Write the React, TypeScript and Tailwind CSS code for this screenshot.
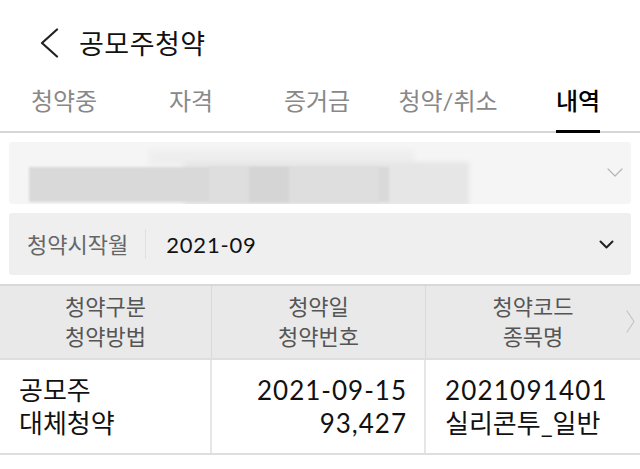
const tabs = ["청약중", "자격", "증거금", "청약/취소", "내역"];

const font = { fontFamily: 'Lato, "Noto Sans CJK KR", "Noto Sans", sans-serif' };

function Chevron({ d, w, h, stroke, width }: { d: string; w: number; h: number; stroke: string; width: number }) {
  return (
    <svg width={w} height={h} viewBox={`0 0 ${w} ${h}`} fill="none">
      <path d={d} stroke={stroke} strokeWidth={width} strokeLinecap="round" strokeLinejoin="round" />
    </svg>
  );
}

export default function App() {
  return (
    <div className="w-[640px] h-[469px] bg-white overflow-hidden text-[#111]" style={font}>
      {/* 헤더 */}
      <div className="h-[84px] flex items-center pl-[40px] pt-[2px]">
        <Chevron d="M17 1.5 L2 15 L17 28.5" w={19} h={30} stroke="#222" width={2.2} />
        <div className="ml-[20px] text-[27px] leading-none tracking-[0.5px]">공모주청약</div>
      </div>

      {/* 탭 */}
      <div className="h-[49px] flex border-b-2 border-[#d6d6d6]">
        <div className="w-[128px] flex justify-center">
          <span className="text-[24px] text-[#888] leading-[34px]">{tabs[0]}</span>
        </div>
        <div className="w-[126px] flex justify-center">
          <span className="text-[24px] text-[#888] leading-[34px]">{tabs[1]}</span>
        </div>
        <div className="w-[126px] flex justify-center">
          <span className="text-[24px] text-[#888] leading-[34px]">{tabs[2]}</span>
        </div>
        <div className="w-[136px] flex justify-center">
          <span className="text-[24px] text-[#888] leading-[34px]">{tabs[3]}</span>
        </div>
        <div className="w-[124px] flex justify-center">
          <span className="text-[24px] text-black font-medium leading-[34px] border-b-[3px] border-black h-[49px] -mb-[2px]">
            {tabs[4]}
          </span>
        </div>
      </div>

      {/* 계좌 선택 (가림) */}
      <div className="px-[9px] pt-[9px] flex flex-col gap-[9px]">
        <div className="relative h-[62px] bg-[#f5f5f5] rounded-[3px] flex items-center justify-end pr-[8px] overflow-hidden">
          <div className="absolute left-[140px] top-[8px] w-[265px] h-[16px] bg-[#eeeeee] blur-[2px]" />
          <div className="absolute left-[175px] top-[20px] w-[285px] h-[44px] bg-[#e6e6e6] blur-[2px]" />
          <div className="absolute left-[20px] top-[25px] w-[360px] h-[35px] bg-[#d9d9d9] blur-[1px]" />
          <div className="absolute left-[200px] top-[25px] w-[170px] h-[35px] bg-[#dedede] blur-[1px]" />
          <div className="absolute left-[240px] top-[25px] w-[40px] h-[35px] bg-[#d5d5d5] blur-[1px]" />
          <Chevron d="M1 1 L8 8 L15 1" w={16} h={10} stroke="#b5b5b5" width={1.2} />
        </div>

        <div className="h-[62px] bg-[#efefef] rounded-[3px] flex items-center pl-[18px] pr-[17px]">
          <span className="text-[22px] text-[#666]">청약시작월</span>
          <div className="w-px h-[30px] bg-[#e0e0e0] ml-[17px] mr-[20px]" />
          <span className="text-[22px] text-[#111] tracking-[0.8px] flex-1">2021-09</span>
          <Chevron d="M1.5 1.5 L7.5 7.5 L13.5 1.5" w={15} h={9} stroke="#222" width={2} />
        </div>
      </div>

      {/* 테이블 */}
      <div className="mt-[9px] border-t-2 border-[#d8d8d8]">
        <div className="relative h-[72px] bg-[#e9e9e9] grid grid-cols-[212px_214px_214px] text-[22px] text-[#555] leading-[30px]">
          <div className="flex flex-col items-center justify-center border-r border-[#d9d9d9]">
            <span>청약구분</span>
            <span>청약방법</span>
          </div>
          <div className="flex flex-col items-center justify-center border-r border-[#d9d9d9]">
            <span>청약일</span>
            <span>청약번호</span>
          </div>
          <div className="flex flex-col items-center justify-center">
            <span>청약코드</span>
            <span>종목명</span>
          </div>
          <div className="absolute right-[5px] top-[24px]">
            <Chevron d="M1 1 L8 11.5 L1 22" w={9} h={23} stroke="#c4c4c4" width={1.2} />
          </div>
        </div>
        <div className="h-[97px] grid grid-cols-[212px_214px_214px] text-[26px] leading-[33px] border-t-2 border-b-2 border-[#dedede]">
          <div className="flex flex-col justify-center pl-[19px] border-r-2 border-[#e6e6e6]">
            <span>공모주</span>
            <span>대체청약</span>
          </div>
          <div className="flex flex-col justify-center items-end pr-[17px] border-r-2 border-[#e6e6e6] tracking-[1px]">
            <span>2021-09-15</span>
            <span>93,427</span>
          </div>
          <div className="flex flex-col justify-center pl-[19px]">
            <span className="tracking-[1.2px]">2021091401</span>
            <span>실리콘투_일반</span>
          </div>
        </div>
      </div>
    </div>
  );
}
